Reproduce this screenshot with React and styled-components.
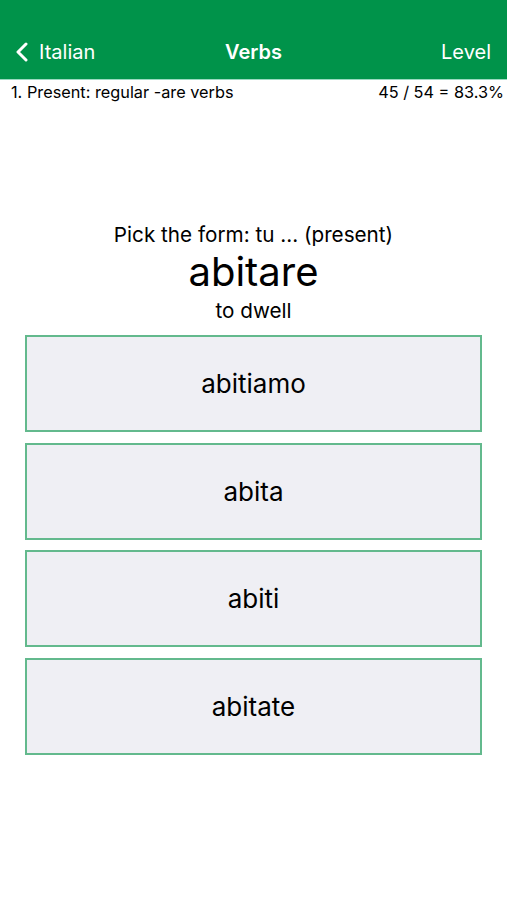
import React from 'react'
import styled, { createGlobalStyle } from 'styled-components'

const GlobalStyle = createGlobalStyle`
  html, body {
    margin: 0;
    padding: 0;
    background: #ffffff;
    font-family: Inter, "Liberation Sans", sans-serif;
    color: #000;
  }
`

const Header = styled.header`
  background: #00934a;
  height: 80px;
  padding-top: 25px;
  box-sizing: border-box;
  border-bottom: 1px solid #9ad9c0;
`

const NavBar = styled.div`
  display: grid;
  grid-template-columns: 1fr auto 1fr;
  align-items: center;
  height: 54px;
  padding: 0 16px 0 16px;
  color: #fff;
  font-size: 20px;
`

const BackLink = styled.div`
  display: flex;
  align-items: center;
  gap: 11px;
  justify-self: start;
`

const Title = styled.div`
  font-weight: 600;
`

const RightLink = styled.div`
  justify-self: end;
`

const InfoBar = styled.div`
  display: flex;
  justify-content: space-between;
  align-items: center;
  height: 24px;
  padding: 0 3px 0 11px;
  font-size: 16.3px;
`

const Question = styled.section`
  display: flex;
  flex-direction: column;
  align-items: center;
  margin-top: 119px;
`

const Prompt = styled.div`
  font-size: 20.7px;
  line-height: 24px;
`

const Verb = styled.div`
  font-size: 40px;
  line-height: 46px;
  margin-top: 2px;
`

const Meaning = styled.div`
  font-size: 20.7px;
  line-height: 24px;
  margin-top: 4px;
`

const Choices = styled.div`
  display: flex;
  flex-direction: column;
  gap: 10.5px;
  margin: 12px 25px 0;
`

const Choice = styled.button`
  height: 97px;
  background: #efeff4;
  border: 2px solid #63b98d;
  font-family: inherit;
  font-size: 26px;
  color: #000;
  padding: 0;
  cursor: pointer;
`

const Chevron = () => (
  <svg width="12" height="20" viewBox="0 0 12 20">
    <path d="M10 2 L2 10 L10 18" fill="none" stroke="#fff" strokeWidth="3" strokeLinecap="round" strokeLinejoin="round" />
  </svg>
)

const options = ['abitiamo', 'abita', 'abiti', 'abitate']

export default function App() {
  return (
    <>
      <GlobalStyle />
      <Header>
        <NavBar>
          <BackLink>
            <Chevron />
            Italian
          </BackLink>
          <Title>Verbs</Title>
          <RightLink>Level</RightLink>
        </NavBar>
      </Header>
      <InfoBar>
        <span>1. Present: regular -are verbs</span>
        <span>45 / 54 = 83.3%</span>
      </InfoBar>
      <Question>
        <Prompt>Pick the form: tu ... (present)</Prompt>
        <Verb>abitare</Verb>
        <Meaning>to dwell</Meaning>
      </Question>
      <Choices>
        {options.map((o) => (
          <Choice key={o}>{o}</Choice>
        ))}
      </Choices>
    </>
  )
}
